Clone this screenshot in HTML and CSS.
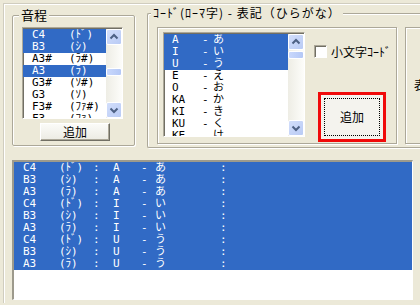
FILE: index.html
```html
<!doctype html>
<html lang="ja">
<head>
<meta charset="UTF-8" />
<title>音程コード</title>
<link rel="stylesheet" href="styles.css">
</head>
<body>
<div class="frame">

<!-- horní část -->
<div class="top">
<fieldset class="grp grp-pitch">
<legend>音程</legend>
<div class="list list-pitch">
<div class="rows">
<div class="row sel"><span>C4</span><span>(ﾄﾞ)</span></div>
<div class="row sel"><span>B3</span><span>(ｼ)</span></div>
<div class="row"><span>A3#</span><span>(ﾗ#)</span></div>
<div class="row sel"><span>A3</span><span>(ﾗ)</span></div>
<div class="row"><span>G3#</span><span>(ｿ#)</span></div>
<div class="row"><span>G3</span><span>(ｿ)</span></div>
<div class="row"><span>F3#</span><span>(ﾌｧ#)</span></div>
<div class="row"><span>F3</span><span>(ﾌｧ)</span></div>
</div>
<div class="sbar">
<div class="sbtn"><svg width="14" height="14" viewBox="0 0 14 14"><path d="M3.5 8.5 L7 5 L10.5 8.5" /></svg></div>
<div class="strack"><div class="sthumb thumb-pitch"></div></div>
<div class="sbtn"><svg width="14" height="14" viewBox="0 0 14 14"><path d="M3.5 5.5 L7 9 L10.5 5.5" /></svg></div>
</div>
</div>
<button class="btn">追加</button>
</fieldset>

<fieldset class="grp grp-code">
<legend>ｺｰﾄﾞ(ﾛｰﾏ字) - 表記（ひらがな）</legend>
<div class="panels">
<div class="panel panel-code">
<div class="list list-code">
<div class="rows">
<div class="row sel"><span>A</span><span>-</span><span>あ</span></div>
<div class="row sel"><span>I</span><span>-</span><span>い</span></div>
<div class="row sel"><span>U</span><span>-</span><span>う</span></div>
<div class="row"><span>E</span><span>-</span><span>え</span></div>
<div class="row"><span>O</span><span>-</span><span>お</span></div>
<div class="row"><span>KA</span><span>-</span><span>か</span></div>
<div class="row"><span>KI</span><span>-</span><span>き</span></div>
<div class="row"><span>KU</span><span>-</span><span>く</span></div>
<div class="row"><span>KE</span><span>-</span><span>け</span></div>
</div>
<div class="sbar">
<div class="sbtn"><svg width="14" height="14" viewBox="0 0 14 14"><path d="M3.5 8.5 L7 5 L10.5 8.5" /></svg></div>
<div class="strack"><div class="sthumb thumb-code"></div></div>
<div class="sbtn"><svg width="14" height="14" viewBox="0 0 14 14"><path d="M3.5 5.5 L7 9 L10.5 5.5" /></svg></div>
</div>
</div>
<div class="side">
<label class="chk"><span class="box"></span>小文字ｺｰﾄﾞ</label>
<button class="btn btn-add"><span class="focus">追加</span></button>
</div>
</div>
<div class="panel panel-more"><span>表</span></div>
</div>
</fieldset>
</div>

<!-- výsledek -->
<div class="list list-result">
<div class="row sel"><span>C4</span><span>(ﾄﾞ)</span><span>:</span><span>A</span><span>-</span><span>あ</span><span>:</span></div>
<div class="row sel"><span>B3</span><span>(ｼ)</span><span>:</span><span>A</span><span>-</span><span>あ</span><span>:</span></div>
<div class="row sel"><span>A3</span><span>(ﾗ)</span><span>:</span><span>A</span><span>-</span><span>あ</span><span>:</span></div>
<div class="row sel"><span>C4</span><span>(ﾄﾞ)</span><span>:</span><span>I</span><span>-</span><span>い</span><span>:</span></div>
<div class="row sel"><span>B3</span><span>(ｼ)</span><span>:</span><span>I</span><span>-</span><span>い</span><span>:</span></div>
<div class="row sel"><span>A3</span><span>(ﾗ)</span><span>:</span><span>I</span><span>-</span><span>い</span><span>:</span></div>
<div class="row sel"><span>C4</span><span>(ﾄﾞ)</span><span>:</span><span>U</span><span>-</span><span>う</span><span>:</span></div>
<div class="row sel"><span>B3</span><span>(ｼ)</span><span>:</span><span>U</span><span>-</span><span>う</span><span>:</span></div>
<div class="row sel"><span>A3</span><span>(ﾗ)</span><span>:</span><span>U</span><span>-</span><span>う</span><span>:</span></div>
</div>

</div>
</body>
</html>
```

FILE: styles.css
```css
html,
body {
overflow: hidden;
}

body {
margin: 0;
width: 420px;
height: 305px;
background-color: #ece9d8;
color: #000;
font-family: "Noto Sans CJK JP", sans-serif;
font-size: 12px;
text-spacing-trim: space-all;
}

/* vnější rám */
.frame {
margin: 3px 0 0 3px;
width: 417px;
height: 300px;
overflow: hidden;
border-top: 1px solid #d0cdbf;
border-left: 1px solid #d0cdbf;
box-shadow: inset 1px 1px #fff;
box-sizing: border-box;
}

.top {
display: flex;
align-items: flex-start;
padding-left: 8px;
}

/* skupiny */
.grp {
margin: 0;
padding: 0;
min-width: 0;
border: 1px solid #aca899;
border-radius: 2px;
box-shadow: inset 1px 1px #fff, 1px 1px #fff;
box-sizing: border-box;
}

.grp legend {
padding: 0 2px;
line-height: 14px;
background-color: #ece9d8;
}

.grp-pitch {
flex: none;
width: 123px;
margin-top: 4px;
padding-bottom: 4px;
}

.grp-pitch legend {
margin-left: 6px;
font-size: 13px;
}

.grp-code {
flex: none;
width: 273px;
margin: 2px 0 0 12px;
border-right: none;
border-radius: 2px 0 0 2px;
}

.grp-code legend {
margin-left: 3px;
letter-spacing: 1px;
}

/* seznamy */
.list {
display: flex;
background-color: #fff;
border: 1px solid;
border-color: #aca899 #fff #fff #aca899;
box-shadow: inset 1px 1px #716f64;
box-sizing: border-box;
overflow: hidden;
font-family: "DejaVu Sans Mono", "Noto Sans CJK JP", monospace;
font-size: 11px;
}

.rows {
flex: 1;
overflow: hidden;
}

.row {
display: grid;
height: 12px;
line-height: 12px;
white-space: nowrap;
}

.row.sel {
background-color: #316ac5;
color: #fff;
}

.list-pitch {
width: 101px;
height: 92px;
margin: 5px 0 0 9px;
padding-top: 1px;
}

.list-pitch .row {
grid-template-columns: 37px auto;
padding-left: 9px;
}

.list-code {
flex: none;
width: 142px;
height: 105px;
margin: 4px 0 0 5px;
padding-top: 1px;
}

.list-code .row {
grid-template-columns: 30px 11px auto;
padding-left: 8px;
}

.list-result {
width: 401px;
height: 140px;
margin: 12px 0 0 8px;
display: block;
border-width: 2px 1px 1px 2px;
border-color: #9d9a8c #fff #fff #9d9a8c;
box-shadow: none;
}

.list-result .row {
grid-template-columns: 36px 34px 20px 28px 14px 65px auto;
padding-left: 9px;
}

/* posuvník */
.sbar {
display: flex;
flex-direction: column;
flex: none;
width: 16px;
background: linear-gradient(to right, #eeede5, #fdfdfa);
}

.sbtn {
height: 16px;
box-sizing: border-box;
border: 1px solid #fff;
border-radius: 2px;
background: linear-gradient(to bottom right, #d2defb, #b9cbf5);
display: flex;
align-items: center;
justify-content: center;
}

.sbtn path {
fill: none;
stroke: #4d6185;
stroke-width: 2;
}

.strack {
flex: 1;
}

.sthumb {
height: 6px;
border: 1px solid #fff;
border-radius: 2px;
background: linear-gradient(to right, #c9d8fc, #b4c8f6);
}

.thumb-pitch {
margin-top: 23px;
}

.thumb-code {
margin-top: 1px;
}

/* tlačítka */
.btn {
display: block;
width: 70px;
height: 18px;
margin: 4px 0 0 27px;
padding: 0;
font-family: "Noto Sans CJK JP", sans-serif;
font-size: 12px;
line-height: 14px;
color: #000;
background: linear-gradient(#fbfbf8, #ecebe3);
border: 1px solid;
border-color: #fff #716f64 #716f64 #fff;
box-shadow: inset -1px -1px #aca899;
}

.btn-add {
width: 68px;
height: 50px;
margin: 34px 0 0 4px;
padding: 3px;
border: 3px solid #f00a0a;
box-shadow: none;
background: #f4f3ee;
box-sizing: border-box;
}

.btn-add .focus {
display: flex;
align-items: center;
justify-content: center;
height: 100%;
border: 1px dotted #000;
box-sizing: border-box;
}

/* panely */
.panels {
display: flex;
gap: 8px;
margin: 7px 0 3px 9px;
}

.panel {
flex: none;
height: 117px;
border: 1px solid #aca899;
box-shadow: inset 1px 1px #fff, 1px 1px #fff;
box-sizing: border-box;
}

.panel-code {
display: flex;
align-items: flex-start;
width: 240px;
}

.panel-more {
width: 15px;
overflow: hidden;
border-right: none;
padding: 48px 0 0 8px;
}

.panel-more span {
display: block;
width: 12px;
}

.side {
display: flex;
flex-direction: column;
padding: 17px 0 0 9px;
}

.chk {
display: flex;
align-items: center;
gap: 4px;
height: 13px;
line-height: 13px;
white-space: nowrap;
}

.chk .box {
flex: none;
width: 13px;
height: 13px;
box-sizing: border-box;
background-color: #fff;
border: 1px solid;
border-color: #aca899 #fff #fff #aca899;
box-shadow: inset 1px 1px #716f64;
}
```
